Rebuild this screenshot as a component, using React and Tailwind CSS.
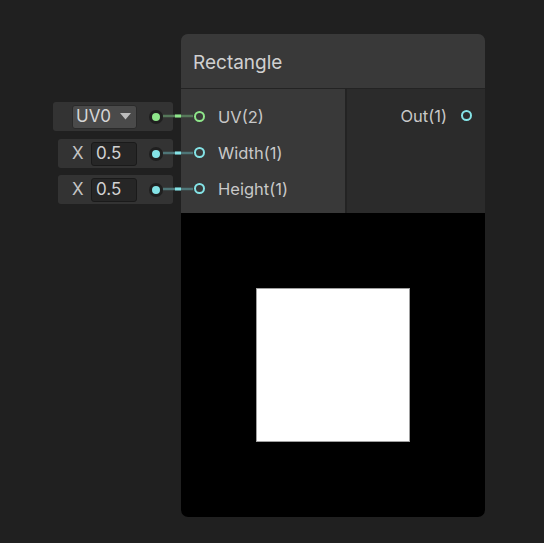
import React from "react";

const GREEN = "#8ee68a";
const CYAN = "#84e3e6";

function Port({ color, label }) {
  return (
    <div className="flex h-[36px] items-center">
      <span
        className="ml-[13px] box-border h-[11px] w-[11px] rounded-full border-2"
        style={{ borderColor: color }}
      />
      <span className="ml-[13px] pt-[2px] text-[16.5px] leading-none text-[#c8c8c8]">{label}</span>
    </div>
  );
}

function Dot({ color }) {
  return (
    <span className="flex h-[14px] w-[14px] items-center justify-center rounded-full bg-[#1f1f1f]">
      <span className="h-[8px] w-[8px] rounded-full" style={{ background: color }} />
    </span>
  );
}

function FloatField({ top }) {
  return (
    <div
      className="absolute left-[58px] flex h-[29px] w-[115px] items-center rounded-[3px] bg-[#333333]"
      style={{ top }}
    >
      <span className="ml-[14px] w-[19px] text-[17px] leading-none text-[#c4c4c4]">X</span>
      <span className="flex h-[24px] w-[46px] items-center rounded-[3px] border border-[#1a1a1a] bg-[#262626] pl-[4px] text-[17px] leading-none text-[#d2d2d2]">
        0.5
      </span>
      <span className="ml-auto mr-[10px]">
        <Dot color={CYAN} />
      </span>
    </div>
  );
}

export default function App() {
  return (
    <div
      className="relative h-[543px] w-[544px] overflow-hidden bg-[#202020]"
      style={{ fontFamily: "Inter, 'Noto Sans', sans-serif" }}
    >
      {/* inline value fields wired into the node */}
      <div className="absolute left-[53px] top-[102px] flex h-[29px] w-[120px] items-center rounded-[3px] bg-[#333333]">
        <span className="ml-[19px] flex h-[24px] w-[65px] items-center rounded-[3px] border border-[#2a2a2a] bg-[#4a4a4a] pl-[3px] text-[17px] leading-none text-[#d6d6d6]">
          UV0
          <svg width="11" height="7" viewBox="0 0 11 7" className="ml-[9px]">
            <path d="M0 0h11L5.5 6.5z" fill="#bdbdbd" />
          </svg>
        </span>
        <span className="ml-auto mr-[10px]">
          <Dot color={GREEN} />
        </span>
      </div>
      <FloatField top={139} />
      <FloatField top={175} />

      {/* node */}
      <div className="absolute left-[181px] top-[34px] flex h-[483px] w-[304px] flex-col overflow-hidden rounded-[7px] bg-[#2b2b2b]">
        <div className="flex h-[55px] items-center border-b border-[#232323] bg-[#393939] pl-[12px] pt-[2px] text-[19px] leading-none text-[#d0d0d0]">
          Rectangle
        </div>
        <div className="flex h-[124px]">
          <div className="w-[164px] bg-[#393939] pt-[9px]">
            <Port color={GREEN} label="UV(2)" />
            <Port color={CYAN} label="Width(1)" />
            <Port color={CYAN} label="Height(1)" />
          </div>
          <div className="w-[2px] bg-[#232323]" />
          <div className="flex flex-1 items-start justify-end pt-[8px]">
            <div className="flex h-[36px] items-center">
              <span className="pt-[3px] text-[16.5px] leading-none text-[#c8c8c8]">Out(1)</span>
              <span
                className="ml-[14px] mr-[13px] box-border h-[11px] w-[11px] rounded-full border-2"
                style={{ borderColor: CYAN }}
              />
            </div>
          </div>
        </div>
        <div className="flex flex-1 items-center justify-center bg-black">
          <div className="h-[154px] w-[154px] border border-[#a0a0a0] bg-white" />
        </div>
      </div>

      {/* wires */}
      <svg className="pointer-events-none absolute left-0 top-0" width="544" height="543">
        {[
          { y: 116, c: GREEN, d: "#56785a" },
          { y: 153, c: CYAN, d: "#4e7577" },
          { y: 189, c: CYAN, d: "#4e7577" },
        ].map((w) => (
          <g key={w.y}>
            <line x1="163" y1={w.y} x2="193" y2={w.y} stroke={w.d} strokeWidth="2.5" />
            <line x1="175" y1={w.y} x2="181" y2={w.y} stroke={w.c} strokeWidth="3" />
          </g>
        ))}
      </svg>
    </div>
  );
}
